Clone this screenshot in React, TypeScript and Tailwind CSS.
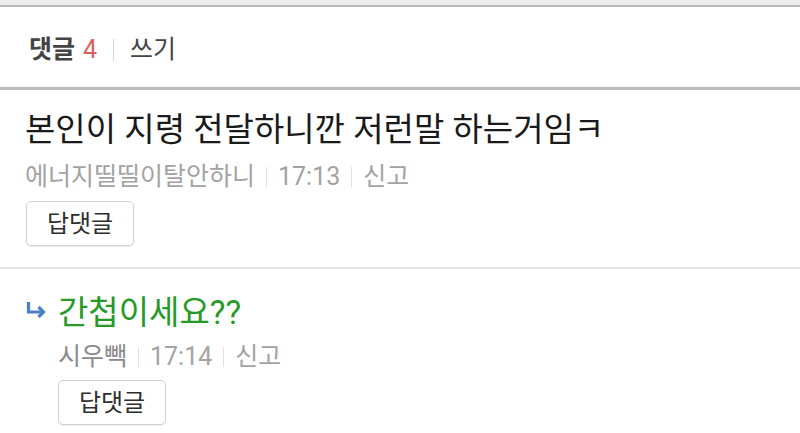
import React from "react";

const font = { fontFamily: "Roboto, 'Noto Sans CJK KR', sans-serif" };

const ReplyButton = () => (
  <button className="h-[45px] w-[108px] rounded-[5px] border border-[#d2d2d2] bg-white text-[24px] text-[#2e2e2e] shadow-[0_1px_1px_rgba(0,0,0,0.08)]">
    답댓글
  </button>
);

const Sep = () => <span className="mx-[11px] inline-block h-[20px] w-px bg-[#e2e2e2] align-[-2px]" />;

export default function App() {
  return (
    <div className="h-[433px] w-[800px] overflow-hidden bg-white" style={font}>
      <div className="h-[5px] bg-[#ededed]" />
      <div className="h-[2px] bg-[#b7b7b7]" />

      {/* header */}
      <div className="flex h-[80px] items-center border-b border-[#f4f4f4] px-[29px] pt-[6px] text-[25px]">
        <span className="font-bold text-[#444]">댓글</span>
        <span className="ml-[8px] text-[#d9605c]">4</span>
        <span className="mx-[16px] inline-block h-[22px] w-px bg-[#d6d6d6]" />
        <span className="text-[#444]">쓰기</span>
      </div>
      <div className="h-[3px] bg-[#bdbdbd]" />

      {/* comment */}
      <div className="border-b-2 border-[#e3e3e3] px-[25px] pt-[20px] pb-[21px]">
        <p className="text-[33px] leading-[40px] text-[#1a1a1a]">본인이 지령 전달하니깐 저런말 하는거임ㅋ</p>
        <div className="mt-[13px] text-[25px] leading-[28px] text-[#a3a3a3]">
          에너지띨띨이탈안하니
          <Sep />
          17:13
          <Sep />
          신고
        </div>
        <div className="mt-[10px] pl-[1px]">
          <ReplyButton />
        </div>
      </div>

      {/* reply */}
      <div className="px-[26px] pt-[24px]">
        <div className="flex items-center">
          <svg width="20" height="16" viewBox="0 0 20 16" className="mr-[12px] mt-[-6px]">
            <path d="M2.5 0 V10 H17" fill="none" stroke="#4a80c6" strokeWidth="3.2" />
            <path d="M12.5 5 L17.5 10 L12.5 15" fill="none" stroke="#4a80c6" strokeWidth="3.2" strokeLinejoin="miter" />
          </svg>
          <p className="text-[33px] leading-[40px] text-[#269a26]">간첩이세요??</p>
        </div>
        <div className="ml-[32px] mt-[10px] text-[25px] leading-[28px] text-[#a3a3a3]">
          <span className="text-[#8a8a8a]">시우빽</span>
          <Sep />
          17:14
          <Sep />
          신고
        </div>
        <div className="ml-[32px] mt-[9px]">
          <ReplyButton />
        </div>
      </div>
    </div>
  );
}
